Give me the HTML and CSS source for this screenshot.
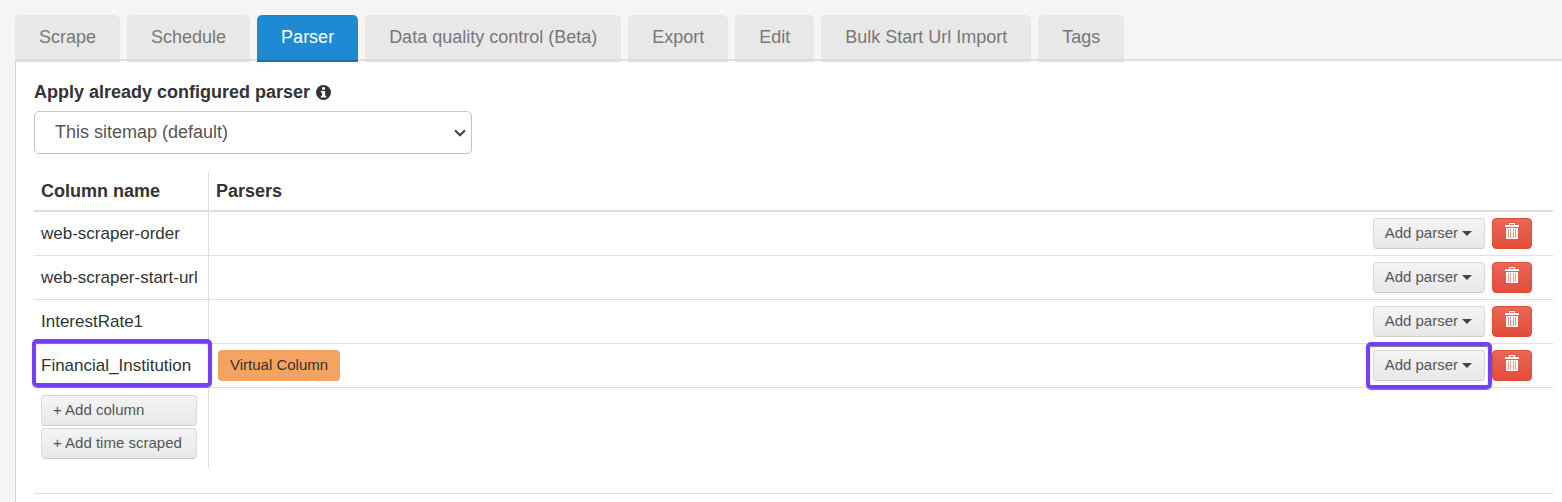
FILE: index.html
```html
<!DOCTYPE html>
<html lang="en">
<head>
<meta charset="utf-8">
<title>Sitemap parser</title>
<link rel="stylesheet" href="styles.css">
</head>
<body>
<svg class="sprite" aria-hidden="true">
  <symbol id="trash" viewBox="0 0 16 17">
    <path fill="#fff" d="M5 0h6v2h4v2H1V2h4zM6.200 1v1h3.600V1zM2 5h12v10q0 1-1 1H3q-1 0-1-1z"/>
    <path stroke="#ee9a90" stroke-width="1" fill="none" d="M4.500 6v9M6.500 6v9M9.500 6v9M11.500 6v9"/>
  </symbol>
</svg>
<nav class="tabs">
  <a class="tab" href="#scrape">Scrape</a>
  <a class="tab" href="#schedule">Schedule</a>
  <a class="tab tab-active" href="#parser" aria-current="page">Parser</a>
  <a class="tab" href="#quality">Data quality control (Beta)</a>
  <a class="tab" href="#export">Export</a>
  <a class="tab" href="#edit">Edit</a>
  <a class="tab" href="#import">Bulk Start Url Import</a>
  <a class="tab" href="#tags">Tags</a>
</nav>
<main class="panel">
  <div class="field">
    <label class="field-label" for="sitemap">Apply already configured parser
      <svg class="info" viewBox="0 0 16 16" aria-hidden="true"><circle cx="8" cy="8" r="8" fill="#333"/><path fill="#fff" d="M6.500 2.500h3.200v2.500H6.500zM5.200 6.300h4.500v5.200h1.200v1.700H5.200v-1.700h1.300V8H5.200z"/></svg>
    </label>
    <div class="select-wrap">
      <select class="select" id="sitemap"><option>This sitemap (default)</option></select>
      <svg class="chevron" viewBox="0 0 12 8" aria-hidden="true"><path d="M1 1.200l5 5 5-5" fill="none" stroke="#444" stroke-width="2.200"/></svg>
    </div>
  </div>
  <table class="columns">
    <thead>
      <tr><th class="name">Column name</th><th>Parsers</th></tr>
    </thead>
    <tbody>
      <tr>
        <td class="name">web-scraper-order</td>
        <td><div class="row"><div class="actions"><button class="btn">Add parser<span class="caret"></span></button><button class="btn btn-danger" aria-label="Delete"><svg class="trash"><use href="#trash"/></svg></button></div></div></td>
      </tr>
      <tr>
        <td class="name">web-scraper-start-url</td>
        <td><div class="row"><div class="actions"><button class="btn">Add parser<span class="caret"></span></button><button class="btn btn-danger" aria-label="Delete"><svg class="trash"><use href="#trash"/></svg></button></div></div></td>
      </tr>
      <tr>
        <td class="name">InterestRate1</td>
        <td><div class="row"><div class="actions"><button class="btn">Add parser<span class="caret"></span></button><button class="btn btn-danger" aria-label="Delete"><svg class="trash"><use href="#trash"/></svg></button></div></div></td>
      </tr>
      <tr>
        <td class="name marked">Financial_Institution</td>
        <td><div class="row"><span class="badge">Virtual Column</span><div class="actions"><span class="marked"><button class="btn">Add parser<span class="caret"></span></button></span><button class="btn btn-danger" aria-label="Delete"><svg class="trash"><use href="#trash"/></svg></button></div></div></td>
      </tr>
    </tbody>
    <tfoot>
      <tr>
        <td class="name"><div class="add-list"><button class="btn">+ Add column</button><button class="btn">+ Add time scraped</button></div></td>
        <td></td>
      </tr>
    </tfoot>
  </table>
  <hr class="divider">
</main>
</body>
</html>
```
FILE: styles.css
```css
* { box-sizing: border-box; }
html { height: 100%; }
body {
  margin: 0;
  min-height: 100%;
  padding: 15px 0 0 15px;
  display: flex;
  flex-direction: column;
  background: #f5f5f5;
  color: #333;
  font: 18px/26px "Liberation Sans", Arial, sans-serif;
}
.sprite { position: absolute; width: 0; height: 0; }
.tabs {
  display: flex;
  gap: 7px;
  border-bottom: 2px solid #e0e0e0;
}
.tab {
  position: relative;
  margin-bottom: -3px;
  padding: 9px 24px 12px;
  border-radius: 5px 5px 0 0;
  background: #e8e8e8;
  box-shadow: inset 0 -2px #dfdfdf, inset 0 -3px #d8d8d8;
  color: #777;
  text-decoration: none;
  white-space: nowrap;
}
.tab-active {
  background: #1e8ad1;
  box-shadow: inset 0 -2px #1873b4;
  color: #fff;
}
.panel {
  flex: 1;
  padding: 18px 9px 8px 18px;
  border-left: 1px solid #d2d2d2;
  background: #fff;
}
.field { width: 438px; max-width: 100%; }
.field-label {
  display: flex;
  align-items: center;
  gap: 6px;
  margin-bottom: 6px;
  font-weight: bold;
}
.info { width: 15px; height: 15px; }
.select-wrap { position: relative; }
.select {
  display: block;
  width: 100%;
  height: 43px;
  padding: 0 32px 2px 20px;
  appearance: none;
  border: 1px solid #c4c4c4;
  border-radius: 5px;
  background: #fff;
  color: #555;
  font: inherit;
}
.chevron {
  position: absolute;
  top: 18px;
  right: 6px;
  width: 12px;
  height: 8px;
  pointer-events: none;
}
.columns {
  width: 100%;
  margin-top: 18px;
  border-collapse: separate;
  border-spacing: 0;
}
.columns th {
  height: 40px;
  padding: 0 7px;
  border-bottom: 2px solid #ddd;
  text-align: left;
}
.columns td {
  height: 44px;
  padding: 0 7px;
  border-bottom: 1px solid #e1e1e1;
  font-size: 17px;
}
.columns .name {
  width: 175px;
  padding-right: 1px;
  border-right: 1px solid #ddd;
  white-space: nowrap;
}
.columns tfoot td {
  height: 80px;
  border-bottom: 0;
  vertical-align: top;
}
.row { display: flex; align-items: center; }
.actions {
  display: flex;
  gap: 7px;
  margin-left: auto;
  padding-right: 14px;
}
.btn {
  display: inline-flex;
  align-items: center;
  height: 31px;
  padding: 0 12px 1px 11px;
  border: 1px solid #d9d9d9;
  border-bottom-color: #ccc;
  border-radius: 4px;
  background: linear-gradient(#f4f4f4, #e8e8e8);
  color: #555;
  font: 15px/20px "Liberation Sans", Arial, sans-serif;
  white-space: nowrap;
}
.caret {
  margin: 1px 0 0 4px;
  border: 5px solid transparent;
  border-top-color: #444;
  border-bottom: 0;
}
.btn-danger {
  width: 40px;
  justify-content: center;
  padding: 0 0 4px;
  border-color: #e04b38;
  background: linear-gradient(#e96758, #e24c39);
}
.trash { width: 16px; height: 17px; }
.badge {
  margin-left: 2px;
  padding: 5px 12px 6px;
  border-radius: 4px;
  background: #f4a460;
  color: #333;
  font-size: 15px;
  line-height: 20px;
}
.add-list {
  display: flex;
  flex-direction: column;
  gap: 2px;
  width: 156px;
  padding-top: 7px;
}
.marked { position: relative; display: flex; }
td.marked { display: table-cell; }
.marked::after {
  content: "";
  position: absolute;
  z-index: 1;
  inset: -8px -7px;
  border: 4px solid #753ff5;
  border-radius: 5px;
  box-shadow: 0 1px 1px #777, inset 0 1px 1px #777;
  pointer-events: none;
}
td.marked::after { inset: -5px -4px 0 -2px; }
.divider {
  margin: 25px 0 0;
  border: 0;
  border-top: 1px solid #ddd;
}
```
